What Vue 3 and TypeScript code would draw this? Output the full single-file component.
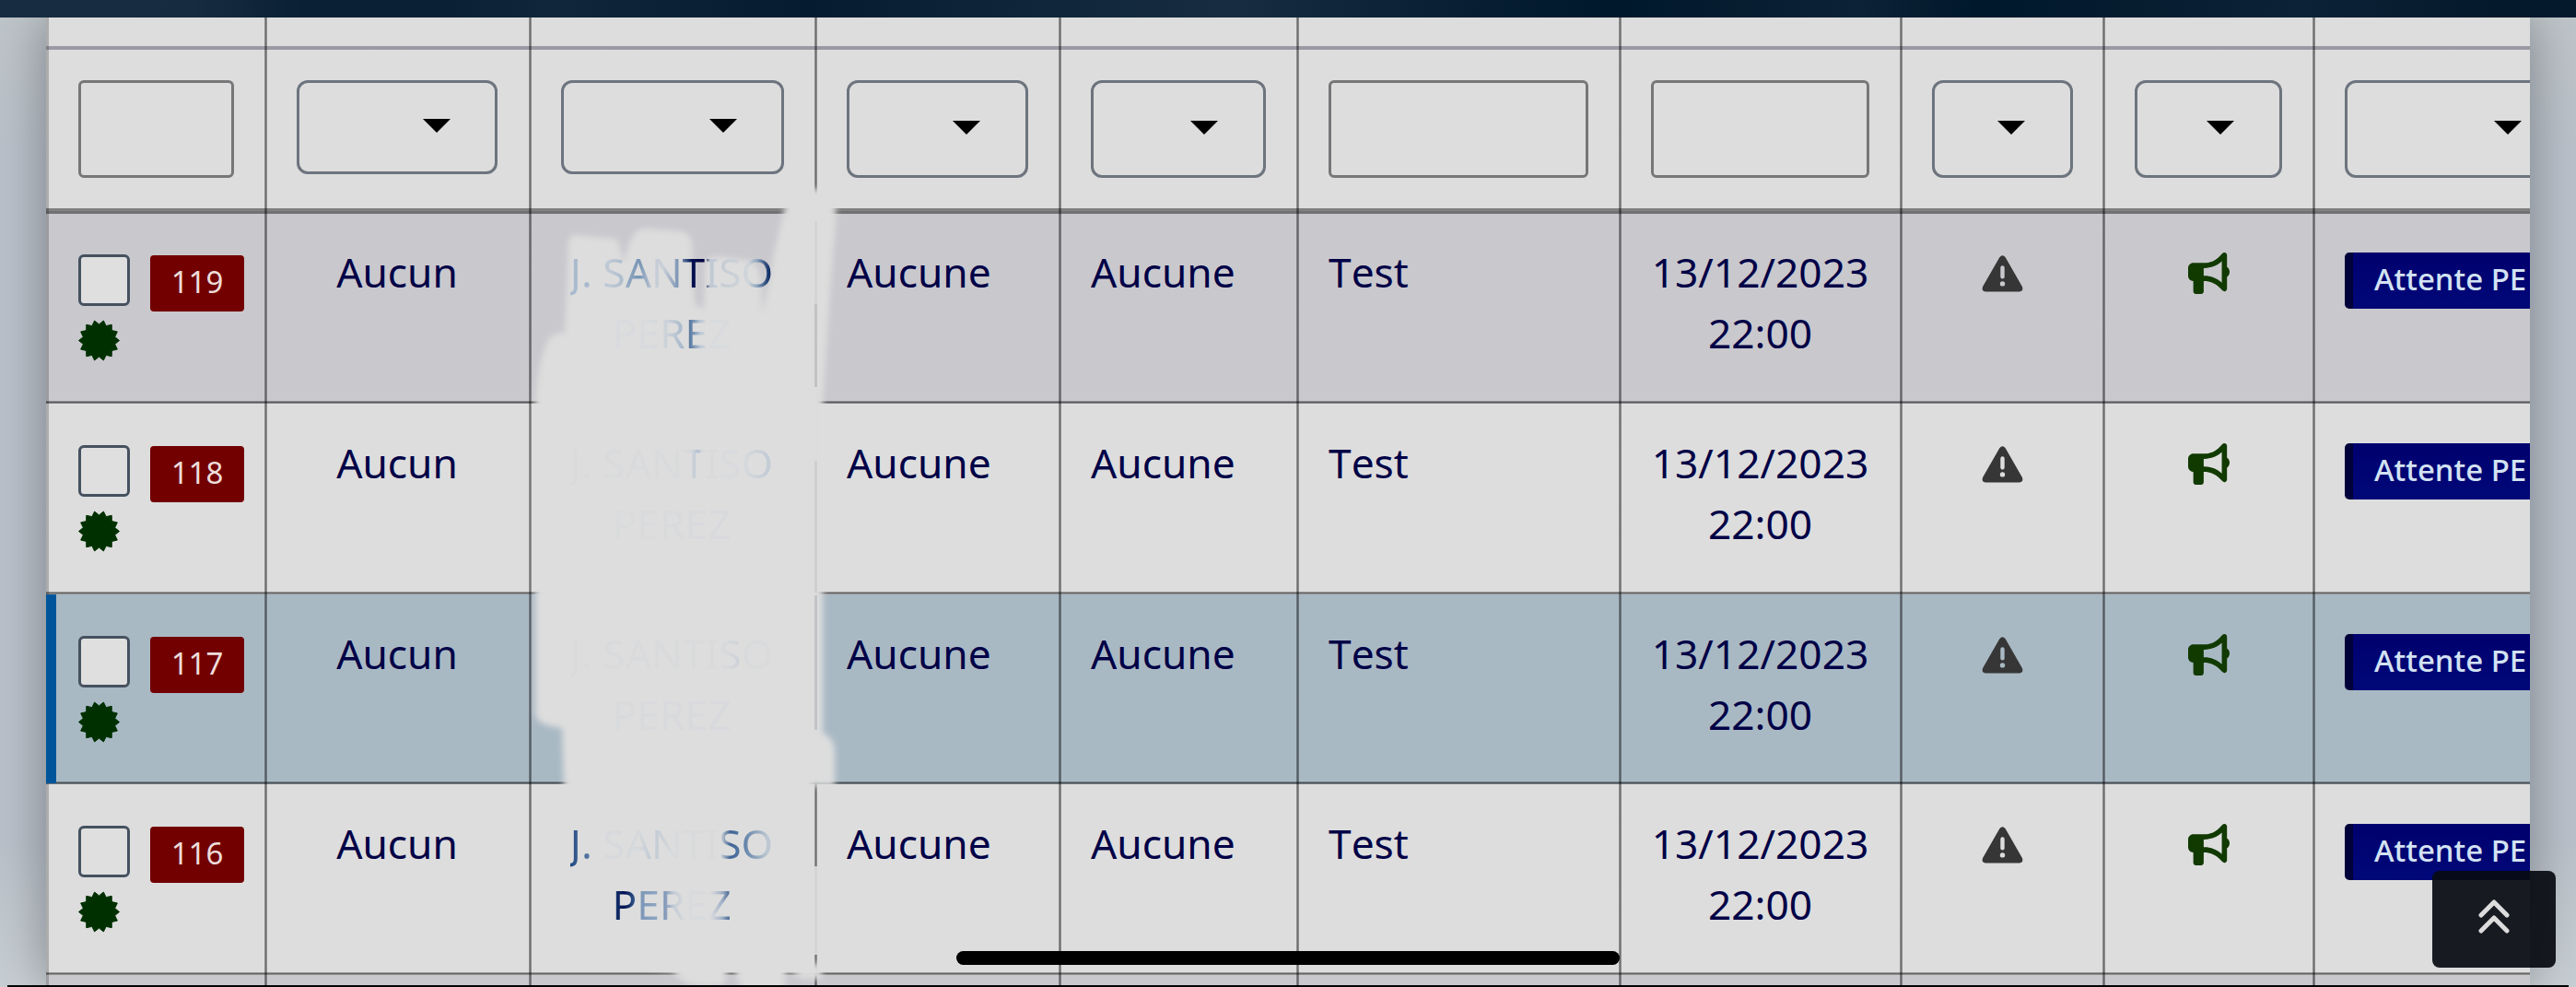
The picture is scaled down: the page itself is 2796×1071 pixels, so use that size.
<script setup lang="ts">
interface Filter {
  kind: 'input' | 'select'
  short?: boolean
}
interface Row {
  id: number
  tone: string
  first: string
  last: string
}

const filters: Filter[] = [
  { kind: 'input' },
  { kind: 'select', short: true },
  { kind: 'select', short: true },
  { kind: 'select' },
  { kind: 'select' },
  { kind: 'input' },
  { kind: 'input' },
  { kind: 'select' },
  { kind: 'select' },
  { kind: 'select' },
]

// "first" and "last" are the ink gradients of the partly erased requester name
const rows: Row[] = [
  {
    id: 119,
    tone: 'tinted',
    first:
      '#a9bacd 0 12%, #c0cad6 19%, #adbccd 26%, #8fa5bf 29%, #7895b6 34%, #c5ccd6 41%, #c9d0d8 46%, #6b87ac 55%, #001050 60%, #000040 66%, #c0c8d4 69%, #c8ced6 76%, #d0d5da 88%, #8fa6c0 92%, #00205c 99%',
    last: '#d8dade 0 30%, #d3d7dc 42%, #c3ccd6 50%, #a9b9cc 59%, #54769f 65%, #b8c5d4 74%, #d9dadd 80%',
  },
  {
    id: 118,
    tone: 'plain',
    first: '#d9dadc 0 58%, #d3d7db 60%, #b0bfcf 63%, #d9dadc 65%, #d8dadd 85%, #c3ccd6 97%',
    last: '#dadbdc, #d8d9dc',
  },
  {
    id: 117,
    tone: 'active',
    first: '#d9dadc 0 72%, #d6d8db 78%, #ced2d8 83%, #d8dadc 86%',
    last: '#d9dadc, #d8d9dc',
  },
  {
    id: 116,
    tone: 'plain',
    first:
      '#1f4780 0, #4a6c9c 6%, #5f7fa8 12%, #d7d9dc 16%, #d6d9dc 34%, #bfc9d4 40%, #d8dadc 50%, #d9dadc 74%, #3f6595 79%, #5b7ca5 85%, #7a95b4 89%, #bcc7d2 97%',
    last: '#1a3c74 0, #001050 10%, #274a80 17%, #7d97b8 24%, #8fa6c2 38%, #7892b4 43%, #c5ccd6 52%, #dadbdc 62%, #d6d8dc 84%, #9fb0c6 93%, #3a5a8c 100%',
  },
]

// Fourteen-point star around the centre of a 45px box
const seal = Array.from({ length: 28 }, (_, i) => {
  const angle = ((i + 1) * Math.PI) / 14 - Math.PI / 2
  const radius = i % 2 ? 17.6 : 22
  return `${(22.5 + radius * Math.cos(angle)).toFixed(2)},${(22.5 + radius * Math.sin(angle)).toFixed(2)}`
}).join(' ')
</script>

<template>
  <div class="screen">
    <div class="topbar"></div>
    <div class="panel">
      <div class="grid titles">
        <div v-for="(f, i) in filters" :key="i" class="cell"></div>
      </div>
      <div class="grid filters">
        <div v-for="(f, i) in filters" :key="i" class="cell">
          <div :class="['field', f.kind, { short: f.short }]">
            <svg v-if="f.kind === 'select'" width="30" height="15" viewBox="0 0 30 15"><path d="M0 0H30L15 15Z" /></svg>
          </div>
        </div>
      </div>
      <div v-for="row in rows" :key="row.id" :class="['grid', 'row', row.tone, 'r' + row.id]">
        <div class="cell ident">
          <div class="line">
            <span class="check"></span>
            <span class="badge">{{ row.id }}</span>
          </div>
          <svg class="seal" width="45" height="45" viewBox="0 0 45 45">
            <polygon :points="seal" />
          </svg>
        </div>
        <div class="cell center">Aucun</div>
        <div class="cell center name">
          <span :style="{ backgroundImage: `linear-gradient(90deg, ${row.first})` }">J. SANTISO</span>
          <span :style="{ backgroundImage: `linear-gradient(90deg, ${row.last})` }">PEREZ</span>
        </div>
        <div class="cell">Aucune</div>
        <div class="cell">Aucune</div>
        <div class="cell">Test</div>
        <div class="cell center date">13/12/2023<br />22:00</div>
        <div class="cell icon">
          <svg class="warn" width="45" height="40" viewBox="0 0 45 40">
            <path
              fill-rule="evenodd"
              d="M19.3 2.3Q22.5-1.8 25.7 2.3L43.9 34Q45.6 38.8 41 39.5H4Q-.6 38.8 1.1 34ZM22.5 11.3Q20.3 11.3 20.3 13.5V23.5Q20.3 25.6 22.5 25.6Q24.7 25.6 24.7 23.5V13.5Q24.7 11.3 22.5 11.3ZM22.5 28.2A2.7 2.7 0 1 0 22.5 33.6A2.7 2.7 0 1 0 22.5 28.2Z"
            />
          </svg>
        </div>
        <div class="cell icon">
          <svg class="horn" width="45" height="45" viewBox="0 0 512 512">
            <path
              d="M480 32c0-12.900-7.800-24.600-19.800-29.600s-25.700-2.200-34.900 6.900L381.700 53c-48 48-113.100 75-181 75H64c-35.300 0-64 28.700-64 64v96c0 35.300 28.700 64 64 64v128c0 17.700 14.300 32 32 32h64c17.700 0 32-14.300 32-32V352h8.700c67.900 0 133 27 181 75l43.600 43.600c9.200 9.200 22.900 11.900 34.900 6.900s19.800-16.600 19.800-29.600V300.400c18.600-8.800 32-32.500 32-60.400s-13.400-51.600-32-60.400V32zm-64 76.700V371.300C357.200 317.800 280.500 288 200.700 288H192V192h8.700c79.800 0 156.500-29.800 215.300-83.300z"
            />
          </svg>
        </div>
        <div class="cell last"><span class="status">Attente PE</span></div>
      </div>
      <div class="grid row tinted tail">
        <div v-for="(f, i) in filters" :key="i" class="cell"></div>
      </div>
    </div>

    <svg class="smudge" width="2796" height="1071" viewBox="0 0 2796 1071">
      <defs>
        <filter id="soft" x="-5%" y="-5%" width="110%" height="110%"><feGaussianBlur stdDeviation="3.4" /></filter>
      </defs>
      <g filter="url(#soft)" fill="#dddddd">
        <path
          d="M617 264Q617 254 626 255L668 259Q673 261 673 272L678 284Q684 248 700 248L740 251Q750 254 751 264L754 330L764 335L765 287Q768 278 780 278L815 283Q827 290 826 310L828 340L840 275L851 228L858 212L880 204L907 210L907 240L900 330L893 440V795Q906 802 906 815V853H612L610 790Q582 787 581 775V430Q584 395 594 370Q600 360 613 361Z"
        />
        <path d="M583 430H880V850H880V1046H892V1062H870L852 1050H795L790 1054H728L640 1040V860H612L612 790L583 775Z" />
        <path d="M728 1050H790L786 1068Q740 1076 728 1050ZM796 1050H854L850 1080H808Z" />
      </g>
      <g fill="none" stroke-width="3">
        <path d="M885.500 240V330" stroke="#d4d4d4" />
        <path d="M885.500 330V420" stroke="#c2c2c2" />
        <path d="M885.500 500V643" stroke="#cfcfcf" />
        <path d="M885.500 646V792" stroke="#c2c3c6" />
        <path d="M885.500 940V1036" stroke="#d4d4d4" />
      </g>
    </svg>

    <div class="homebar"></div>
    <div class="bottom"></div>
    <div class="totop">
      <svg width="34" height="38" viewBox="0 0 34 38">
        <path d="M3 17L17 3L31 17M3 34L17 20L31 34" />
      </svg>
    </div>
  </div>
</template>

<style>
body {
  margin: 0;
  background: #dcdcdc;
}
</style>

<style scoped>
.screen {
  position: relative;
  display: flex;
  flex-direction: column;
  width: 2796px;
  height: 1071px;
  overflow: hidden;
  background: linear-gradient(180deg, #bfc6c9 0, #b9c1ca 15%, #b9c1ca 85%, #c8cfd3 100%);
  font-family: 'Noto Sans', 'Open Sans', sans-serif;
  font-size: 44.3px;
  font-kerning: none;
  line-height: 66px;
  color: #000046;
}
.topbar {
  position: relative;
  z-index: 1;
  flex: none;
  height: 19px;
  background: linear-gradient(90deg, #172c41 0, #162b40 210px, #0a2035 330px, #0a2035 480px, #10263b 600px, #051c30 880px, #0c2338 1050px, #172c41 1340px, #0c2338 1500px, #00182b 1750px, #0c2236 2020px, #00182b 2150px, #0c2236 2500px, #04192c 2700px);
}
.panel {
  flex: none;
  width: 2696px;
  height: 1050px;
  margin-left: 50px;
  overflow: hidden;
  background: #dddddd;
  box-shadow: 0 0 52px rgba(0, 4, 8, 0.34);
}
.grid {
  display: grid;
  grid-template-columns: 240px 287px 310px 265px 258px 350px 305px 220px 228px 312px;
  width: 2775px;
}
.cell {
  --v: linear-gradient(90deg, rgba(0, 0, 0, 0.36) 0 1px, rgba(0, 0, 0, 0.5) 1px 2px, rgba(0, 0, 0, 0.36) 2px);
  --h: linear-gradient(180deg, rgba(0, 0, 0, 0.32) 0 1px, rgba(0, 0, 0, 0.54) 1px 2px, rgba(0, 0, 0, 0.34) 2px);
  box-sizing: border-box;
  padding: 31px 36px 0 32px;
  background: var(--v) right / 3px 100% no-repeat, var(--h) bottom / 100% 3px no-repeat;
  white-space: nowrap;
}
.cell:nth-child(2) {
  padding-right: 37px;
}
.cell:nth-child(8) {
  padding-right: 35px;
}
.cell:first-child {
  padding-left: 35px;
  background: var(--v) right / 3px 100% no-repeat, var(--h) bottom / 100% 3px no-repeat,
    linear-gradient(rgba(0, 0, 0, 0.22), rgba(0, 0, 0, 0.22)) left / 3px 100% no-repeat;
}
.titles {
  height: 35px;
}
.titles .cell {
  --h: linear-gradient(rgba(62, 62, 85, 0.42), rgba(62, 62, 85, 0.42));
  background-size: 3px 100%, 100% 4px, 3px 100%;
}
.filters {
  height: 178px;
}
.filters .cell {
  --h: linear-gradient(180deg, rgba(0, 0, 0, 0.42) 0 3px, rgba(0, 0, 0, 0.49) 3px 6px);
  padding-top: 33px;
  background-size: 3px 100%, 100% 6px, 3px 100%;
}
.field {
  box-sizing: border-box;
  display: flex;
  justify-content: flex-end;
  height: 106px;
  border: 3px solid #77777a;
  border-radius: 6px;
}
.select {
  padding: 41px 49px 0 0;
  border-color: #6d747e;
  border-radius: 12px;
}
.select.short {
  height: 102px;
  padding: 39px 48px 0 0;
}
.row {
  height: 207px;
}
.r119,
.r117 {
  height: 206px;
}
.r119 .cell {
  padding-top: 30px;
}
.tinted {
  background: #c9c8cd;
}
.active {
  position: relative;
  background: #a9b9c4;
}
.active::before {
  content: '';
  position: absolute;
  left: 0;
  top: 0;
  width: 11px;
  height: 205px;
  background: #00559a;
}
.tail {
  height: 12px;
}
.center {
  text-align: center;
}
.row .ident {
  padding-right: 0;
}
.ident .line {
  display: flex;
  align-items: flex-start;
  padding-top: 14px;
}
.check {
  flex: none;
  box-sizing: border-box;
  width: 56px;
  height: 56px;
  border: 3px solid #45515f;
  border-radius: 6px;
  background: #dfdfdf;
}
.badge {
  flex: none;
  width: 102px;
  height: 61px;
  margin: 1px 0 0 22px;
  border-radius: 4px;
  background: #720000;
  color: #eddcda;
  font-size: 33px;
  line-height: 58px;
  text-align: center;
}
.seal {
  display: block;
  margin-top: 9px;
  fill: #003000;
  stroke: #003000;
  stroke-width: 1;
  stroke-linejoin: round;
}
.row .name {
  display: flex;
  flex-direction: column;
  align-items: center;
  padding-right: 38px;
}
.name span {
  position: relative;
  z-index: 3;
  color: transparent;
  background-clip: text;
  -webkit-background-clip: text;
}
.date {
  padding-left: 20px;
  padding-right: 24px;
}
.icon {
  display: flex;
  justify-content: center;
  align-items: flex-start;
}
.icon svg {
  flex: none;
}
.warn {
  margin-top: 15px;
  fill: #363636;
}
.horn {
  margin-top: 12px;
  fill: #113a00;
}
.status {
  box-sizing: border-box;
  display: block;
  width: 320px;
  height: 61px;
  margin-top: 12px;
  padding-left: 23px;
  border-left: 9px solid #00003a;
  border-radius: 5px;
  background: linear-gradient(180deg, #00006e, #000878);
  color: #d3e2f3;
  font-size: 33px;
  font-weight: 500;
  line-height: 58px;
}
.smudge {
  position: absolute;
  left: 0;
  top: 0;
  z-index: 2;
}
.homebar {
  position: absolute;
  left: 1038px;
  top: 1032px;
  width: 720px;
  height: 15px;
  border-radius: 8px;
  background: #000;
}
.bottom {
  position: absolute;
  left: 8px;
  right: 8px;
  bottom: 0;
  z-index: 4;
  height: 2px;
  background: #000;
}
.totop {
  position: absolute;
  left: 2640px;
  top: 945px;
  display: flex;
  align-items: center;
  justify-content: center;
  box-sizing: border-box;
  width: 134px;
  height: 105px;
  padding-bottom: 5px;
  padding-right: 1px;
  border-radius: 8px;
  background: rgba(7, 11, 17, 0.93);
}
.totop path {
  fill: none;
  stroke: #dcdcdc;
  stroke-width: 5;
  stroke-linecap: round;
  stroke-linejoin: round;
}
</style>
